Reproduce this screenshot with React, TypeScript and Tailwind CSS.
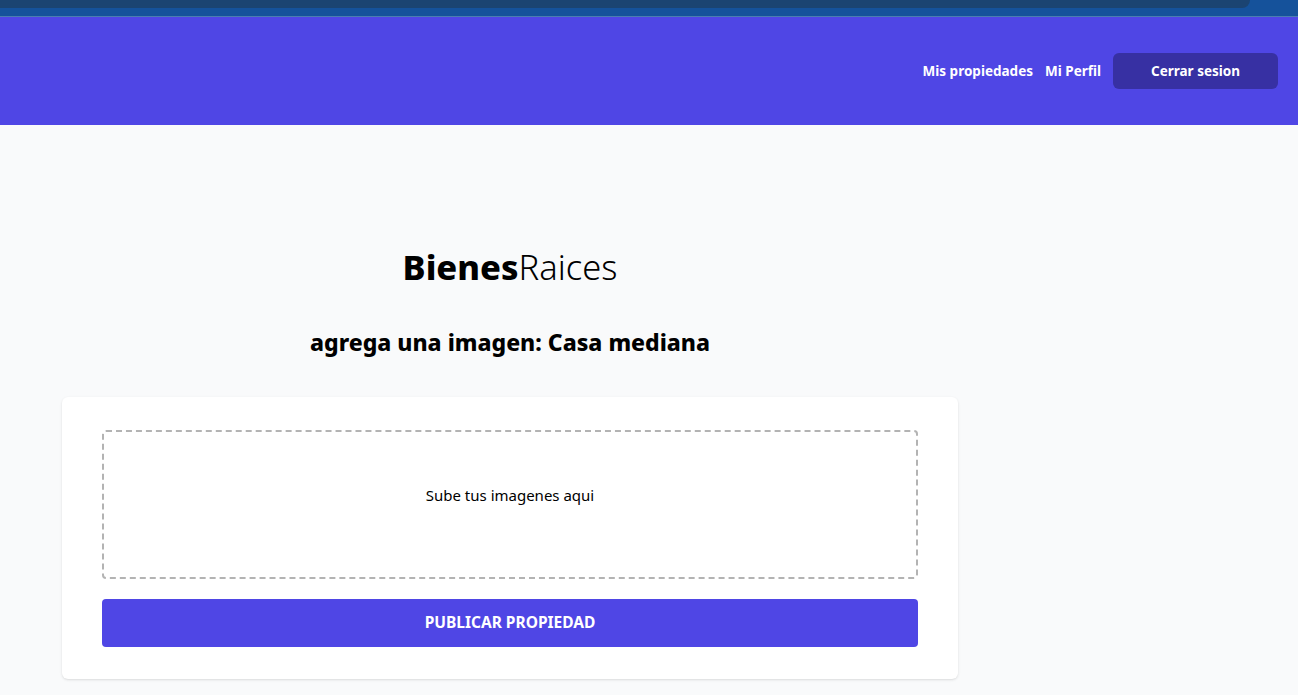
export default function App() {
  return (
    <div className="min-h-[695px] bg-gray-50 font-['Noto_Sans',sans-serif]">
      {/* strip above the page */}
      <div className="h-4 bg-[#15529b]">
        <div className="h-2 w-[1250px] bg-[#1b4472] rounded-br-lg" />
      </div>
      <div className="h-px bg-[#4a7db0]" />

      <header className="h-[108px] bg-[#4f46e5] flex items-center justify-end px-5">
        <nav className="flex items-center gap-3 text-[13.5px] font-bold text-white">
          <a href="#">Mis propiedades</a>
          <a href="#">Mi Perfil</a>
          <button className="w-[165px] h-9 rounded-md bg-[#3730a3] text-white font-bold">
            Cerrar sesion
          </button>
        </nav>
      </header>

      <main className="w-[1020px] flex flex-col items-center pt-[125px]">
        <h1 className="text-[34.5px] leading-none text-black">
          <span className="font-extrabold">Bienes</span>
          <span className="font-light">Raices</span>
        </h1>
        <h2 className="mt-[41px] text-[23px] leading-8 font-extrabold text-black">
          agrega una imagen: Casa mediana
        </h2>

        <div className="mt-[39px] w-[896px] bg-white rounded-md shadow px-10 pt-[33px] pb-8">
          <div className="h-[149px] border-2 border-dashed border-[#b3b3b3] rounded flex items-center justify-center pb-[18px] text-[15px] text-black">
            Sube tus imagenes aqui
          </div>
          <button className="mt-5 w-full h-12 rounded bg-[#4f46e5] text-white font-bold uppercase text-[15.5px]">
            Publicar propiedad
          </button>
        </div>
      </main>
    </div>
  );
}
